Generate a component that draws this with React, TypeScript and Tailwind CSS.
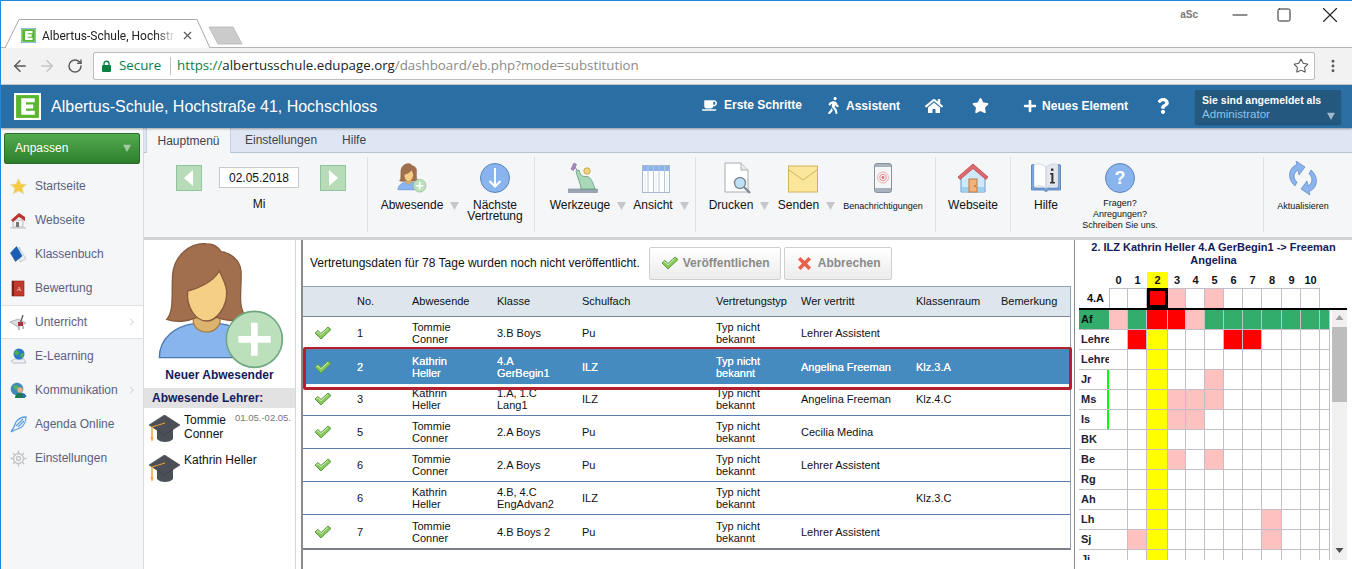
import { ArrowLeft, ArrowRight, RotateCw, Star, MoreVertical, Minus, Square, X, ChevronRight } from "lucide-react";
import { FaCoffee, FaWalking, FaHome, FaStar, FaPlus, FaQuestion } from "react-icons/fa";

const SANS = "font-['Liberation_Sans',Arial,sans-serif]";

type Row = { ok: boolean; no: string; who: string[]; cls: string[]; subj: string; sub: string; room: string; active?: boolean };

const ROWS: Row[] = [
  { ok: true, no: "1", who: ["Tommie", "Conner"], cls: ["3.B Boys"], subj: "Pu", sub: "Lehrer Assistent", room: "" },
  { ok: true, no: "2", who: ["Kathrin", "Heller"], cls: ["4.A", "GerBegin1"], subj: "ILZ", sub: "Angelina Freeman", room: "Klz.3.A", active: true },
  { ok: true, no: "3", who: ["Kathrin", "Heller"], cls: ["1.A, 1.C", "Lang1"], subj: "ILZ", sub: "Angelina Freeman", room: "Klz.4.C" },
  { ok: true, no: "5", who: ["Tommie", "Conner"], cls: ["2.A Boys"], subj: "Pu", sub: "Cecilia Medina", room: "" },
  { ok: true, no: "6", who: ["Tommie", "Conner"], cls: ["2.A Boys"], subj: "Pu", sub: "Lehrer Assistent", room: "" },
  { ok: false, no: "6", who: ["Kathrin", "Heller"], cls: ["4.B, 4.C", "EngAdvan2"], subj: "ILZ", sub: "", room: "Klz.3.C" },
  { ok: true, no: "7", who: ["Tommie", "Conner"], cls: ["4.B Boys 2"], subj: "Pu", sub: "Lehrer Assistent", room: "" },
];

const TABLE_COLS = "grid grid-cols-[54px_55px_85px_85px_134px_85px_115px_85px_1fr]";
const GRID_COLS = "grid grid-cols-[30px_19px_19px_21px_18px_19px_19px_19px_19px_20px_19px_19px_10px]";
const PERIODS = ["0", "1", "2", "3", "4", "5", "6", "7", "8", "9", "10"];

const PINK = "bg-[#ffc0c0]";
const RED = "bg-[#ff0000]";
const GREEN = "bg-[#33ad6b]";

type Teacher = { name: string; mark?: string; cells: Record<number, string> };

const TEACHERS: Teacher[] = [
  { name: "Lehre", mark: "bg-[#f7c27c]", cells: { 1: RED, 6: RED, 7: RED } },
  { name: "Lehre", mark: "bg-[#f7c27c]", cells: {} },
  { name: "Jr", mark: "bg-[#00ff00]", cells: { 5: PINK } },
  { name: "Ms", mark: "bg-[#00ff00]", cells: { 3: PINK, 4: PINK, 5: PINK } },
  { name: "Is", mark: "bg-[#00ff00]", cells: { 3: PINK, 4: PINK } },
  { name: "BK", cells: {} },
  { name: "Be", cells: { 3: PINK, 5: PINK } },
  { name: "Rg", cells: {} },
  { name: "Ah", cells: {} },
  { name: "Lh", cells: { 8: PINK } },
  { name: "Sj", cells: { 1: PINK, 8: PINK } },
  { name: "Ji", cells: {} },
];

const AF_CELLS: Record<number, string> = { 0: PINK, 2: RED, 3: RED, 4: PINK };

function Check() {
  return (
    <svg width="18" height="14" viewBox="0 0 18 14">
      <path d="M1 7 L4 4.5 L7 7.5 L14 1 L17 3.5 L7 13 Z" fill="#86c95a" stroke="#5d9a45" strokeWidth="1" strokeLinejoin="round" />
      <path d="M2.5 6.8 L4 5.8 L7 8.8 L14 2.4" fill="none" stroke="#d4f0b8" strokeWidth="1" />
    </svg>
  );
}

function Tri({ className = "fill-[#c4c7cb]" }: { className?: string }) {
  return (
    <svg width="10" height="10" viewBox="0 0 10 10" className={className}>
      <path d="M0 1 H10 L5 10 Z" />
    </svg>
  );
}

function Logo({ size, border }: { size: number; border: string }) {
  return (
    <svg width={size} height={size} viewBox="0 0 26 26" className="block">
      <rect x="0.5" y="0.5" width="25" height="25" fill="#fff" stroke={border} />
      <rect x="2" y="2" width="22" height="22" fill="#5ab52f" />
      <path d="M7 5 H20 V9 H11.5 V11 H18.5 V15 H11.5 V17 H20 V21 H7 Z" fill="#fff" />
    </svg>
  );
}

function Woman({ size }: { size: number }) {
  return (
    <svg width={size} height={size} viewBox="470 330 390 390" className="block">
      <path d="M480 680 C480 620 530 585 585 578 H660 C720 585 770 620 775 680 Z" fill="#88b5ee" stroke="#4a77ad" strokeWidth="4" />
      <path d="M582 540 V575 C590 610 650 615 662 575 V540 Z" fill="#dcb46e" stroke="#a87f48" strokeWidth="4" />
      <path d="M620 338 C570 335 525 375 520 430 C516 490 525 540 502 565 C530 575 565 572 590 560 H655 C685 572 715 572 735 550 C715 520 728 470 725 420 C722 385 690 365 665 362 C655 345 640 338 620 338 Z" fill="#a26f4e" stroke="#875a3d" strokeWidth="4" />
      <path d="M565 480 C590 475 640 455 660 420 C670 440 680 460 682 480 C684 530 650 570 622 570 C590 570 560 530 565 480 Z" fill="#f4cf85" stroke="#875a3d" strokeWidth="4" />
      <circle cx="765" cy="625" r="84" fill="#bcdfbc" stroke="#6fa880" strokeWidth="5" />
      <path d="M755 575 H775 V615 H814 V635 H775 V674 H755 V635 H717 V615 H755 Z" fill="#fff" />
    </svg>
  );
}

function DownCircle() {
  return (
    <svg width="30" height="30" viewBox="0 0 30 30">
      <circle cx="15" cy="15" r="14.5" fill="#8ab4ed" stroke="#5b84bb" />
      <path d="M15 5 V23 M9.5 18 L15 23.5 L20.5 18" fill="none" stroke="#fff" strokeWidth="2" />
    </svg>
  );
}

function Tools() {
  return (
    <svg width="30" height="30" viewBox="0 0 30 30" className="ml-[6px]">
      <rect x="0.500" y="26" width="29" height="3.500" fill="#9aa5b2" stroke="#7c8896" strokeWidth="0.6" />
      <path d="M8 8 L11 7 C12 11 13 13 16 13.500 H19 C23 14 25 20 27 26 H13 C13 21 9 14 8 8 Z" fill="#a8d8b8" stroke="#5e9b78" strokeWidth="0.8" />
      <circle cx="19" cy="8" r="3.200" fill="#f4d67a" stroke="#b89a45" strokeWidth="0.8" />
      <path d="M9 7 L6 3" stroke="#8a7a98" strokeWidth="1" />
      <path d="M3 6 L6 0 L8.500 1.500 L5.500 7.500 Z" fill="#a78bc0" stroke="#7a5d96" strokeWidth="0.6" />
    </svg>
  );
}

function GridIcon() {
  return (
    <svg width="28" height="28" viewBox="0 0 28 28" className="ml-[5px] mt-[1px]">
      <rect x="0.5" y="0.5" width="27" height="27" fill="#fff" stroke="#a9b9cb" />
      <rect x="1" y="1" width="26" height="5" fill="#8ab4ed" />
      <path d="M6 1 V27 M11.5 1 V27 M17 1 V27 M22.5 1 V27" stroke="#b9c6d6" />
      <path d="M3 9 V27 M14 9 V27 M25 9 V27" stroke="#e0eaf5" />
    </svg>
  );
}

function Doc() {
  return (
    <svg width="28" height="32" viewBox="0 0 28 32" className="ml-[14px]">
      <path d="M1 1 H17 L24 8 V30 H1 Z" fill="#fff" stroke="#a8acb4" />
      <path d="M17 1 V8 H24" fill="#e8eaee" stroke="#a8acb4" />
      <circle cx="16" cy="21" r="5.5" fill="#bfe0f5" stroke="#7e8a96" strokeWidth="1.4" />
      <path d="M20 25 L26 31" stroke="#7e8a96" strokeWidth="2.4" />
    </svg>
  );
}

function Envelope() {
  return (
    <svg width="30" height="28" viewBox="0 0 30 28" className="ml-[9px] mt-[1px]">
      <rect x="0.5" y="1" width="29" height="26" fill="#fbe79b" stroke="#d4b25c" />
      <path d="M1 5 L15 15 L29 5" fill="none" stroke="#d4b25c" />
    </svg>
  );
}

function Phone() {
  return (
    <svg width="18" height="30" viewBox="0 0 18 30">
      <rect x="0.5" y="0.5" width="17" height="29" rx="2.5" fill="#a9b2bd" stroke="#88929e" />
      <rect x="1" y="4" width="16" height="21" fill="#f4f6f8" />
      <circle cx="9" cy="14.5" r="5.5" fill="none" stroke="#eeb0b0" />
      <circle cx="9" cy="14.5" r="3.3" fill="none" stroke="#e59090" />
      <circle cx="9" cy="14.5" r="1.4" fill="#e07070" />
    </svg>
  );
}

function House() {
  return (
    <svg width="32" height="32" viewBox="0 0 32 32">
      <path d="M4 14 V30 H28 V14 L16 4 Z" fill="#cfe8fa" stroke="#6a9ac4" />
      <rect x="5" y="25" width="22" height="5" fill="#9fd0f0" />
      <path d="M1 15 L16 2 L31 15 L29 17.5 L16 6.5 L3 17.5 Z" fill="#e0686c" stroke="#b5474c" strokeWidth="0.8" />
      <rect x="12" y="17" width="8" height="13" fill="#f3b27a" stroke="#b87a45" />
      <rect x="17.5" y="23" width="1" height="2" fill="#8a5a2e" />
    </svg>
  );
}

function Book() {
  return (
    <svg width="30" height="30" viewBox="0 0 30 30">
      <path d="M0.5 2 V27 H13 C14 29 16 29 17 27 H29.5 V2 L27 1.5 V25 H17 L15 26 L13 25 H3 V1.5 Z" fill="#7ba7e0" stroke="#4f79ae" strokeWidth="0.8" />
      <path d="M3 2 C7 0 11 1 15 4 V25 C11 22 7 22 3 24 Z" fill="#fff" stroke="#b6c5d8" strokeWidth="0.6" />
      <path d="M15 4 C19 1 23 0 27 2 V24 C23 22 19 22 15 25 Z" fill="#e4e8ee" stroke="#b6c5d8" strokeWidth="0.6" />
      <rect x="20" y="5.5" width="2.4" height="2.4" fill="#333" />
      <path d="M19 10 H22.4 V19 H24 V20.5 H19 V19 H20.4 V11.5 H19 Z" fill="#333" />
    </svg>
  );
}

function QuestionCircle() {
  return (
    <svg width="30" height="30" viewBox="0 0 30 30">
      <circle cx="15" cy="15" r="14.5" fill="#8ab4ed" stroke="#5b84bb" />
      <text x="15" y="21" textAnchor="middle" fontSize="18" fontWeight="700" fill="#fff" fontFamily="Liberation Sans">?</text>
    </svg>
  );
}

function Refresh() {
  return (
    <svg width="30" height="34" viewBox="0 0 30 34">
      <path d="M7 25 C-1 18 0 7 9 3.500 L8 0 L17 6 L11 14 L10 9 C5 12 5 18 9 21 Z" fill="#8ab4ed" stroke="#5b84bb" strokeWidth="0.7" />
      <path d="M23 9 C31 16 30 27 21 30.500 L22 34 L13 28 L19 20 L20 25 C25 22 25 16 21 13 Z" fill="#8ab4ed" stroke="#5b84bb" strokeWidth="0.7" />
    </svg>
  );
}

function Cap() {
  return (
    <svg width="33" height="28" viewBox="0 0 33 28" className="shrink-0">
      <path d="M9 13 V24 C12 28 22 28 25 24 V13 Z" fill="#4b5057" />
      <path d="M16.500 0 L32 10 L16.500 20 L1 10 Z" fill="#4b5057" stroke="#3a3e44" strokeWidth="0.6" />
      <path d="M4 12 L17 8" stroke="#f0a030" strokeWidth="1" />
      <path d="M4 12 V23" stroke="#f0a030" strokeWidth="1.4" />
      <path d="M2.500 22 H5.500 L4 27 Z" fill="#f0a030" />
    </svg>
  );
}

function SideIcon({ name }: { name: string }) {
  switch (name) {
    case "star":
      return (
        <svg width="17" height="17" viewBox="0 0 17 17">
          <path d="M8.500 0.500 L11 6 L16.500 6.500 L12.300 10.300 L13.700 16 L8.500 13 L3.300 16 L4.700 10.300 L0.500 6.500 L6 6 Z" fill="#f5c944" stroke="#e8e0b0" strokeWidth="0.6" />
        </svg>
      );
    case "house":
      return (
        <svg width="17" height="17" viewBox="0 0 17 17">
          <path d="M3 8 V15 H13 V8 Z" fill="#f2f2f2" stroke="#999" strokeWidth="0.6" />
          <path d="M1 8 L9 1 L15 5 L15 9 L9 5 L3 10 Z" fill="#b8342c" />
          <rect x="6" y="10" width="3" height="5" fill="#777" />
          <path d="M0 16 H16" stroke="#bbb" />
        </svg>
      );
    case "bluebook":
      return (
        <svg width="17" height="17" viewBox="0 0 17 17">
          <path d="M9 1 L16 13 L10 16 Z" fill="#e8edf2" stroke="#9ca8b5" strokeWidth="0.5" />
          <path d="M6.500 0.500 L12 10 L5.500 15.500 L0.500 7 Z" fill="#1a5fb4" stroke="#0f4486" strokeWidth="0.5" />
        </svg>
      );
    case "redbook":
      return (
        <svg width="17" height="17" viewBox="0 0 17 17">
          <rect x="2" y="1" width="12" height="15" fill="#c0392b" stroke="#8c2218" strokeWidth="0.6" />
          <rect x="2" y="1" width="2" height="15" fill="#7d1f15" />
          <text x="9" y="11" textAnchor="middle" fontSize="7" fill="#f5d0c0" fontFamily="Liberation Serif">A</text>
        </svg>
      );
    case "teach":
      return (
        <svg width="18" height="17" viewBox="0 0 18 17">
          <path d="M0 8 L8 5 L16 9 L8 13 Z" fill="#d9dde2" stroke="#8a9099" strokeWidth="0.6" />
          <path d="M13 1 L10 10" stroke="#555" strokeWidth="1.2" />
          <rect x="8" y="8" width="5" height="4" fill="#b03040" />
          <path d="M9 13 V16 M13 12 V15" stroke="#777" />
        </svg>
      );
    case "globe":
      return (
        <svg width="17" height="17" viewBox="0 0 17 17">
          <path d="M1 13 L5 11 H14 L16 15 H3 Z" fill="#eef0f4" stroke="#98a0ac" strokeWidth="0.6" />
          <circle cx="9" cy="6" r="5.500" fill="#2a78c8" />
          <path d="M6 2 C9 3 10 5 8 7 C6 8 5 6 4 5 Z M10 6 L14 5 L13 9 L11 10 Z" fill="#4caf50" />
        </svg>
      );
    case "people":
      return (
        <svg width="17" height="17" viewBox="0 0 17 17">
          <circle cx="7" cy="7" r="6" fill="#3d8bb8" stroke="#2a6a90" strokeWidth="0.5" />
          <path d="M3 4 L7 3 L9 6 L5 8 Z" fill="#5cae60" />
          <circle cx="10" cy="8" r="2.700" fill="#e8b080" />
          <path d="M5 16 C5 12 8 11 10 11 C13 11 15 13 15 16 Z" fill="#1e7a50" />
          <path d="M12 11 C15 11 16 13 16.500 15 H13 Z" fill="#2a6ec0" />
        </svg>
      );
    case "feather":
      return (
        <svg width="18" height="17" viewBox="0 0 18 17" fill="none" stroke="#5f9fe0" strokeWidth="1.300">
          <path d="M1 16 C4 12 5 9 6 6 C8 3 12 1 16 1 C16 5 14 10 10 12 C7 13 4 14 1 16 Z" />
          <path d="M6 10 L13 3 M8 11 L14 5" />
        </svg>
      );
    default:
      return (
        <svg width="17" height="17" viewBox="0 0 17 17" fill="none" stroke="#c2c4c8" strokeWidth="1.300">
          <circle cx="8.500" cy="8.500" r="5" />
          <circle cx="8.500" cy="8.500" r="2" />
          <path d="M8.500 0.500 V3 M8.500 14 V16.500 M0.500 8.500 H3 M14 8.500 H16.500 M3 3 L5 5 M12 12 L14 14 M14 3 L12 5 M5 12 L3 14" />
        </svg>
      );
  }
}

const SIDE = [
  { icon: "star", label: "Startseite" },
  { icon: "house", label: "Webseite" },
  { icon: "bluebook", label: "Klassenbuch" },
  { icon: "redbook", label: "Bewertung" },
  { icon: "teach", label: "Unterricht", active: true, more: true },
  { icon: "globe", label: "E-Learning" },
  { icon: "people", label: "Kommunikation", more: true },
  { icon: "feather", label: "Agenda Online" },
  { icon: "gear", label: "Einstellungen" },
];

function Tool({ w, icon, label, menu, small }: { w: string; icon: React.ReactNode; label: string[]; menu?: boolean; small?: boolean }) {
  return (
    <div className={`${w} flex flex-col items-center`}>
      <div className="h-[30px] flex items-center justify-center">{icon}</div>
      <div className={`mt-[7px] flex items-start text-center text-[#111] ${small ? "text-[9px] leading-[12px]" : "text-[12px] leading-[11px]"}`}>
        <div>
          {label.map((l) => (
            <div key={l} className="whitespace-nowrap">{l}</div>
          ))}
        </div>
        {menu && (
          <span className="ml-[7px] -mr-[16px] pt-[1px]">
            <Tri className="fill-[#c4c7cb] w-[9px] h-[9px]" />
          </span>
        )}
      </div>
    </div>
  );
}

function Section({ w, children }: { w: string; children: React.ReactNode }) {
  return <div className={`${w} h-[75px] flex pt-[6px] border-r border-[#dfe1e6] shrink-0`}>{children}</div>;
}

function ArrowBtn({ dir }: { dir: "l" | "r" }) {
  return (
    <div className="w-[26px] h-[26px] bg-[#b8dcb8] border border-[#8fc49f] flex items-center justify-center shrink-0">
      <svg width="10" height="16" viewBox="0 0 10 16" className="fill-white">
        <path d={dir === "l" ? "M9 0 V16 L0 8 Z" : "M1 0 V16 L10 8 Z"} />
      </svg>
    </div>
  );
}

export default function App() {
  return (
    <div className={`${SANS} w-[1352px] h-[569px] overflow-hidden flex flex-col bg-white border-t border-l border-[#1e88dc] text-[12px] text-[#111]`}>
      {/* Browser tab strip */}
      <div className="h-[47px] shrink-0 relative border-b border-[#b4b4b4] flex">
        <svg width="245" height="47" viewBox="0 0 245 47" className="absolute left-0 top-0">
          <path d="M4 47 L18 18.500 H196 L209 47" fill="#fff" stroke="#aaa" />
          <path d="M208 26 H232 L241 43 H217 Z" fill="#cbcbcb" stroke="#bdbdbd" />
        </svg>
        <div className="relative ml-[20px] mt-[27px] flex items-center h-[15px]">
          <Logo size={15} border="#3a8fd0" />
          <div className="ml-[6px] w-[134px] overflow-hidden whitespace-nowrap text-[12px] text-[#222] font-['Roboto',sans-serif] [mask-image:linear-gradient(to_right,black_85%,transparent)]">
            Albertus-Schule, Hochstra
          </div>
          <X size={13} strokeWidth={2} className="ml-[5px] text-[#555]" />
        </div>
        <div className="flex-1" />
        <div className="flex items-center h-[26px] mt-[1px] mr-[9px] text-[#222]">
          <span className="mr-[30px] text-[10px] font-bold text-[#777] leading-[12px]">aSc</span>
          <Minus size={24} strokeWidth={1} className="mr-[24px]" />
          <Square size={16} strokeWidth={1.5} className="mr-[25px]" />
          <X size={26} strokeWidth={1} />
        </div>
      </div>

      {/* Browser address row */}
      <div className="h-[37px] shrink-0 bg-[#f2f2f2] flex items-center pl-[10px] border-b border-[#c9c9c9]">
        <ArrowLeft size={18} strokeWidth={2} className="text-[#5a5a5a]" />
        <ArrowRight size={18} strokeWidth={2} className="ml-[9px] text-[#c4c4c4]" />
        <RotateCw size={16} strokeWidth={2.2} className="ml-[11px] text-[#5a5a5a]" />
        <div className="ml-[10px] w-[1222px] h-[28px] bg-white border border-[#bdbdbd] rounded-[2px] flex items-center pl-[8px] font-['Open_Sans',sans-serif] text-[13.3px]">
          <svg width="9" height="12" viewBox="0 0 9 12">
            <path d="M2 5 V3.500 C2 0.500 7 0.500 7 3.500 V5" fill="none" stroke="#0b8043" strokeWidth="1.300" />
            <rect x="0" y="5" width="9" height="7" rx="1" fill="#0b8043" />
          </svg>
          <span className="ml-[8px] text-[#0b8043] w-[51px]">Secure</span>
          <span className="w-px h-[18px] bg-[#c4c4c4]" />
          <span className="ml-[6px] text-[#0b8043]">https://</span>
          <span className="text-[#222]">albertusschule.edupage.org</span>
          <span className="text-[#8a8a8a]">/dashboard/eb.php?mode=substitution</span>
          <div className="flex-1" />
          <Star size={16} strokeWidth={1.6} className="mr-[5px] text-[#555]" />
        </div>
        <MoreVertical size={16} strokeWidth={2.4} className="ml-[10px] text-[#5a5a5a]" />
      </div>

      {/* App header */}
      <div className="h-[43px] shrink-0 bg-[#2b6ea3] flex items-center text-white shadow-[0_1px_2px_rgba(0,0,0,0.35)] relative">
        <div className="ml-[13px]">
          <Logo size={27} border="#ffffff" />
        </div>
        <div className="ml-[10px] text-[16px] whitespace-nowrap w-[330px]">Albertus-Schule, Hochstraße 41, Hochschloss</div>
        <div className="ml-[321px] -mt-[2px] flex items-center font-bold text-[12px]">
          <FaCoffee size={15} />
          <span className="ml-[7px] -mt-[2px]">Erste Schritte</span>
          <FaWalking size={17} className="ml-[23px]" />
          <span className="ml-[4px]">Assistent</span>
          <FaHome size={18} className="ml-[25px]" />
          <FaStar size={17} className="ml-[29px]" />
          <FaPlus size={14} className="ml-[34px]" />
          <span className="ml-[5px]">Neues Element</span>
          <FaQuestion size={16} className="ml-[27px]" />
        </div>
        <div className="ml-[24px] mt-[1px] w-[146px] h-[34px] bg-[#24587f] rounded-[2px] pl-[7px] pr-[6px] pt-[3px] shadow-[0_1px_1px_rgba(0,0,0,0.3)]">
          <div className="text-[10.5px] font-bold leading-[14px] whitespace-nowrap">Sie sind angemeldet als</div>
          <div className="flex items-center justify-between text-[11.5px] text-[#8cc3ee] leading-[15px]">
            Administrator
            <span className="mt-[3px]">
              <Tri className="fill-[#9fb8cc] w-[8px] h-[8px]" />
            </span>
          </div>
        </div>
      </div>

      <div className="flex-1 flex min-h-0">
        {/* Left menu */}
        <div className="w-[143px] shrink-0 bg-[#f5f6f8] border-r border-[#d8dadf] pt-[5px]">
          <div className="ml-[3px] w-[136px] h-[31px] pb-[2px] rounded-[2px] border border-[#2a6a2a] bg-gradient-to-b from-[#52ab4e] to-[#2d7f2d] flex items-center justify-between pl-[10px] pr-[8px] text-white">
            Anpassen
            <Tri className="fill-[#a5c9a5] w-[8px] h-[8px]" />
          </div>
          <div className="mt-[5px]">
            {SIDE.map((s) => (
              <div
                key={s.label}
                className={`h-[34px] flex items-center pl-[9px] pr-[5px] text-[#5c6080] ${s.active ? "bg-white border-y border-[#dfe1e4] text-[#4a3a4a]" : ""}`}
              >
                <div className="w-[25px] shrink-0">
                  <SideIcon name={s.icon} />
                </div>
                <span className="flex-1">{s.label}</span>
                {s.more && <ChevronRight size={12} className="text-[#c8cbd0]" />}
              </div>
            ))}
          </div>
        </div>

        <div className="flex-1 flex flex-col min-w-0">
          {/* Ribbon tabs */}
          <div className="h-[25px] shrink-0 bg-[#dde6f2] border-b border-[#b7c4d6] flex text-[#3d4450]">
            <div className="ml-[2px] w-[85px] h-[25px] bg-[#f5f6f8] border-x border-[#c5d0df] flex items-center justify-center">Hauptmenü</div>
            <div className="ml-[14px] flex items-center">Einstellungen</div>
            <div className="ml-[25px] flex items-center">Hilfe</div>
          </div>

          {/* Ribbon */}
          <div className="h-[84px] shrink-0 bg-[#f5f6f8] flex pt-[4px] border-b-[3px] border-[#d2d3d5] box-border h-[87px]">
            <div className="w-[224px] h-[75px] shrink-0 flex pl-[32px] pt-[8px] border-r border-[#dfe1e6]">
              <ArrowBtn dir="l" />
              <div className="ml-[17px] w-[80px] flex flex-col items-center pt-[2px]">
                <div className="w-full h-[21px] bg-white border border-[#c9c9c9] flex items-center justify-center text-[12px]">02.05.2018</div>
                <div className="mt-[10px] leading-[12px]">Mi</div>
              </div>
              <div className="ml-[21px]">
                <ArrowBtn dir="r" />
              </div>
            </div>
            <Section w="w-[167px]">
              <Tool w="w-[88px]" icon={<Woman size={30} />} label={["Abwesende"]} menu />
              <Tool w="w-[78px]" icon={<DownCircle />} label={["Nächste", "Vertretung"]} />
            </Section>
            <Section w="w-[161px]">
              <Tool w="w-[90px]" icon={<Tools />} label={["Werkzeuge"]} menu />
              <Tool w="w-[56px]" icon={<GridIcon />} label={["Ansicht"]} menu />
            </Section>
            <Section w="w-[240px]">
              <Tool w="w-[70px]" icon={<Doc />} label={["Drucken"]} menu />
              <Tool w="w-[65px]" icon={<Envelope />} label={["Senden"]} menu />
              <Tool w="w-[104px]" icon={<Phone />} label={["Benachrichtigungen"]} small />
            </Section>
            <Section w="w-[75px]">
              <Tool w="w-[74px]" icon={<House />} label={["Webseite"]} />
            </Section>
            <Section w="w-[253px]">
              <Tool w="w-[70px]" icon={<Book />} label={["Hilfe"]} />
              <div className="w-[78px] flex flex-col items-center">
                <div className="h-[30px] flex items-center">
                  <QuestionCircle />
                </div>
                <div className="mt-[5px] text-[9px] leading-[11px] text-center whitespace-nowrap">
                  <div>Fragen?</div>
                  <div>Anregungen?</div>
                  <div>Schreiben Sie uns.</div>
                </div>
              </div>
            </Section>
            <div className="w-[78px] h-[75px] pt-[6px] shrink-0">
              <Tool w="w-[78px]" icon={<Refresh />} label={["Aktualisieren"]} small />
            </div>
          </div>

          <div className="flex-1 flex min-h-0">
            {/* Absent teachers */}
            <div className="w-[152px] mr-[5px] shrink-0 border-r border-[#d6d6d6]">
              <div className="ml-[12px] mt-[1px]">
                <Woman size={130} />
              </div>
              <div className="text-center font-bold text-[#141a5c] leading-[14px] -mt-[3px]">Neuer Abwesender</div>
              <div className="mt-[6px] h-[20px] bg-[#e2e2e2] pl-[8px] flex items-center font-bold text-[#141a5c]">Abwesende Lehrer:</div>
              <div className="flex mt-[7px] pl-[4px] h-[40px]">
                <Cap />
                <div className="ml-[3px] -mt-[2px] leading-[14px]">
                  Tommie
                  <br />
                  Conner
                </div>
                <span className="ml-[9px] -mt-[3px] text-[9.5px] text-[#777] leading-[12px] whitespace-nowrap">01.05.-02.05.</span>
              </div>
              <div className="flex pl-[4px]">
                <Cap />
                <div className="ml-[3px] -mt-[2px] leading-[14px]">Kathrin Heller</div>
              </div>
            </div>

            {/* Substitution list */}
            <div className="w-[774px] shrink-0 border-l-2 border-r border-[#8b8b8b] pr-[3px]">
              <div className="h-[46px] flex items-center pl-[7px]">
                <span className="whitespace-nowrap">Vertretungsdaten für 78 Tage wurden noch nicht veröffentlicht.</span>
                <div className="ml-[9px] w-[132px] h-[33px] border border-[#cfcfcf] rounded-[2px] bg-gradient-to-b from-white to-[#ececec] flex items-center pl-[11px] font-bold text-[#8a8a8a] whitespace-nowrap">
                  <Check />
                  <span className="ml-[4px]">Veröffentlichen</span>
                </div>
                <div className="ml-[3px] w-[108px] h-[33px] border border-[#cfcfcf] rounded-[2px] bg-gradient-to-b from-white to-[#ececec] flex items-center pl-[13px] font-bold text-[#8a8a8a]">
                  <svg width="13" height="13" viewBox="0 0 13 13">
                    <path d="M0 2.500 L2.500 0 L6.500 4 L10.500 0 L13 2.500 L9 6.500 L13 10.500 L10.500 13 L6.500 9 L2.500 13 L0 10.500 L4 6.500 Z" fill="#e8604c" />
                  </svg>
                  <span className="ml-[7px]">Abbrechen</span>
                </div>
              </div>

              <div className="border-r border-[#8fa1b5] border-b-2 border-b-[#7b7f88] text-[11px]">
                <div className={`${TABLE_COLS} h-[31px] items-center bg-[#dde6ec] border-t border-b border-t-[#93a3b3] border-b-[#808890]`}>
                  <span />
                  <span>No.</span>
                  <span>Abwesende</span>
                  <span>Klasse</span>
                  <span>Schulfach</span>
                  <span>Vertretungstyp</span>
                  <span>Wer vertritt</span>
                  <span>Klassenraum</span>
                  <span>Bemerkung</span>
                </div>
                {ROWS.map((r, i) => (
                  <div
                    key={i}
                    className={`${TABLE_COLS} h-[33px] items-center leading-[12px] relative ${
                      r.active ? "bg-[#468bc0] text-white [text-shadow:0_0_0.6px_white] shadow-[0_1px_0_#468bc0] z-10" : "border-b border-[#5b7fae] last:border-b-0"
                    }`}
                  >
                    <span className="pl-[11px]">{r.ok && <Check />}</span>
                    <span>{r.no}</span>
                    <span>{r.who[0]}<br />{r.who[1]}</span>
                    <span>{r.cls[0]}{r.cls[1] && <><br />{r.cls[1]}</>}</span>
                    <span>{r.subj}</span>
                    <span>Typ nicht<br />bekannt</span>
                    <span>{r.sub}</span>
                    <span>{r.room}</span>
                    <span />
                    {r.active && (
                      <div className="absolute -top-[3px] -bottom-[7px] left-0 -right-[2px] border-t-2 border-x-[3px] border-b-[3px] border-[#b5202c] rounded-[2px]" />
                    )}
                  </div>
                ))}
              </div>
            </div>

            {/* Timetable detail */}
            <div className="flex-1 min-w-0 pt-[1px]">
              <div className="text-center font-bold text-[#141a5c] text-[11px] leading-[13px] mb-[5px]">
                2. ILZ Kathrin Heller 4.A GerBegin1 -&gt; Freeman Angelina
              </div>
              <div className="ml-[4px] text-[#111]">
                <div className={`${GRID_COLS} h-[16px] font-bold text-[11px] text-center leading-[16px]`}>
                  <span />
                  {PERIODS.map((p) => (
                    <span key={p} className={p === "2" ? "bg-[#ffff00]" : ""}>{p}</span>
                  ))}
                </div>
                <div className={`${GRID_COLS} h-[20px]`}>
                  <span className="font-bold text-[11px] text-center leading-[20px] pl-[3px]">4.A</span>
                  {PERIODS.map((p, i) =>
                    i === 2 ? (
                      <span key={p} className="border-[3px] border-black bg-[#ff0000]" />
                    ) : (
                      <span key={p} className={`border-t border-r border-[#c4bec8] ${i === 0 ? "border-l" : ""} ${i === 3 || i === 5 ? PINK : ""}`} />
                    )
                  )}
                </div>
                <div className="flex w-[268px] border-t-2 border-black h-[252px] overflow-hidden">
                  <div className="w-[251px] shrink-0">
                    <div className={`${GRID_COLS} h-[20px] bg-[#33ad6b]`}>
                      <span className="font-bold text-[11px] pl-[2px] leading-[19px] border-b border-[#c4bec8]">Af</span>
                      {Array.from({ length: 12 }, (_, i) => (
                        <span key={i} className={`border-r border-b border-[#c4bec8] ${AF_CELLS[i] ?? GREEN}`} />
                      ))}
                    </div>
                    {TEACHERS.map((t, n) => (
                      <div key={n} className={`${GRID_COLS} h-[20px]`}>
                        <span className="flex justify-between font-bold text-[11px] pl-[2px] leading-[19px] border-b border-[#c4bec8] overflow-hidden">
                          <span className="text-[#223]">{t.name}</span>
                          {t.mark && <span className={`w-[2px] shrink-0 ${t.mark}`} />}
                        </span>
                        {Array.from({ length: 12 }, (_, i) => (
                          <span key={i} className={`border-r border-b border-[#c4bec8] ${i === 2 ? "bg-[#ffff00]" : t.cells[i] ?? ""}`} />
                        ))}
                      </div>
                    ))}
                  </div>
                  <div className="ml-[2px] w-[15px] h-[250px] bg-[#f0f0f0] flex flex-col items-center">
                    <svg width="9" height="17" viewBox="0 0 9 17" className="fill-[#a0a0a0]">
                      <path d="M4.500 5 L8.500 10 H0.500 Z" />
                    </svg>
                    <div className="w-[15px] h-[75px] bg-[#bdbdbd]" />
                    <div className="flex-1" />
                    <svg width="9" height="17" viewBox="0 0 9 17" className="fill-[#505050]">
                      <path d="M0.500 5 H8.500 L4.500 10 Z" />
                    </svg>
                  </div>
                </div>
              </div>
            </div>
          </div>
        </div>
      </div>
    </div>
  );
}
